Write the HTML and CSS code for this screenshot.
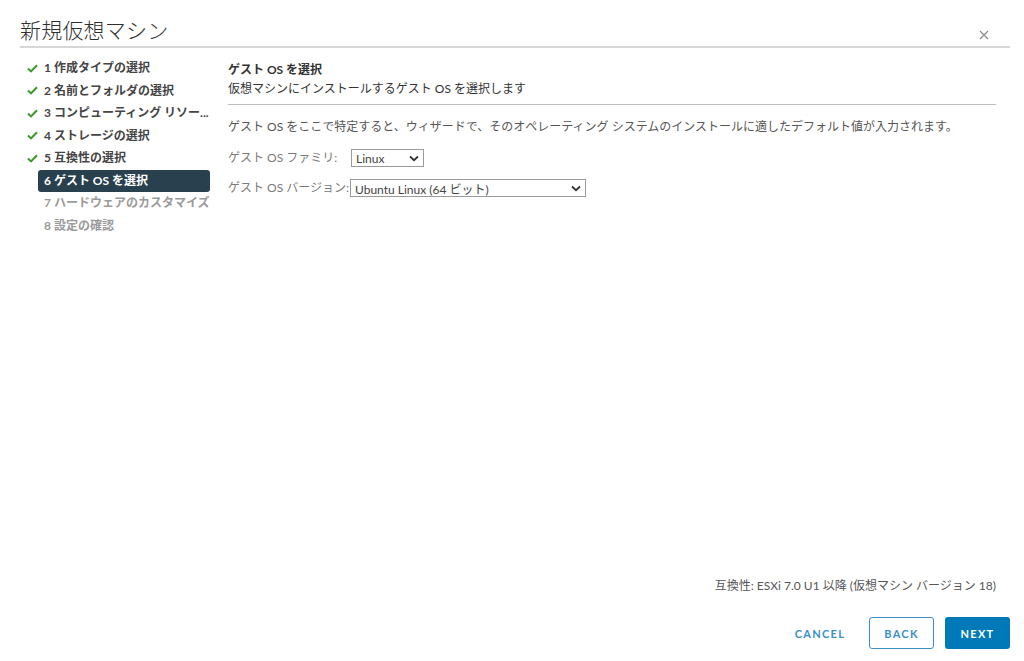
FILE: index.html
```html
<!DOCTYPE html>
<html lang="ja">
<head>
<meta charset="utf-8">
<title>新規仮想マシン</title>
<link rel="stylesheet" href="styles.css">
</head>
<body>
<div class="modal">
  <header class="header">
    <h1 class="title">新規仮想マシン</h1>
    <button class="close" aria-label="閉じる">
      <svg width="10" height="10" viewBox="0 0 10 10"><path d="M1 1 L9 9 M9 1 L1 9" stroke="#8a8a8a" stroke-width="1.2" fill="none"/></svg>
    </button>
  </header>
  <div class="body">
    <nav class="steps">
      <div class="step done"><span class="ico"><svg width="11" height="9" viewBox="0 0 11 9"><path d="M1 4.6 L4 7.4 L10 1.2" stroke="#3a9a2a" stroke-width="2.1" fill="none"/></svg></span><span class="lbl">1 作成タイプの選択</span></div>
      <div class="step done"><span class="ico"><svg width="11" height="9" viewBox="0 0 11 9"><path d="M1 4.6 L4 7.4 L10 1.2" stroke="#3a9a2a" stroke-width="2.1" fill="none"/></svg></span><span class="lbl">2 名前とフォルダの選択</span></div>
      <div class="step done"><span class="ico"><svg width="11" height="9" viewBox="0 0 11 9"><path d="M1 4.6 L4 7.4 L10 1.2" stroke="#3a9a2a" stroke-width="2.1" fill="none"/></svg></span><span class="lbl">3 コンピューティング リソー...</span></div>
      <div class="step done"><span class="ico"><svg width="11" height="9" viewBox="0 0 11 9"><path d="M1 4.6 L4 7.4 L10 1.2" stroke="#3a9a2a" stroke-width="2.1" fill="none"/></svg></span><span class="lbl">4 ストレージの選択</span></div>
      <div class="step done"><span class="ico"><svg width="11" height="9" viewBox="0 0 11 9"><path d="M1 4.6 L4 7.4 L10 1.2" stroke="#3a9a2a" stroke-width="2.1" fill="none"/></svg></span><span class="lbl">5 互換性の選択</span></div>
      <div class="step active"><span class="ico"></span><span class="lbl">6 ゲスト OS を選択</span></div>
      <div class="step todo"><span class="ico"></span><span class="lbl">7 ハードウェアのカスタマイズ</span></div>
      <div class="step todo"><span class="ico"></span><span class="lbl">8 設定の確認</span></div>
    </nav>
    <main class="content">
      <h2 class="heading">ゲスト OS を選択</h2>
      <p class="sub">仮想マシンにインストールするゲスト OS を選択します</p>
      <p class="desc">ゲスト OS をここで特定すると、ウィザードで、そのオペレーティング システムのインストールに適したデフォルト値が入力されます。</p>
      <div class="form">
        <label class="flabel">ゲスト OS ファミリ:</label>
        <div class="select small"><span>Linux</span><svg class="chev" width="10" height="7" viewBox="0 0 10 7"><path d="M1 1.5 L5 5.2 L9 1.5" stroke="#333" stroke-width="1.8" fill="none"/></svg></div>
        <label class="flabel">ゲスト OS バージョン:</label>
        <div class="select wide"><span>Ubuntu Linux (64 ビット)</span><svg class="chev" width="10" height="7" viewBox="0 0 10 7"><path d="M1 1.5 L5 5.2 L9 1.5" stroke="#333" stroke-width="1.8" fill="none"/></svg></div>
      </div>
    </main>
  </div>
  <footer class="footer">
    <p class="compat">互換性: ESXi 7.0 U1 以降 (仮想マシン バージョン 18)</p>
    <div class="buttons">
      <button class="btn link">CANCEL</button>
      <button class="btn outline">BACK</button>
      <button class="btn primary">NEXT</button>
    </div>
  </footer>
</div>
</body>
</html>
```

FILE: styles.css
```css
* { box-sizing: border-box; }
html, body { margin: 0; padding: 0; background: #fff; }
body {
  font-family: Lato, "Noto Sans CJK JP", sans-serif;
  color: #333;
  font-size: 12px;
}
.modal {
  height: 661px;
  display: flex;
  flex-direction: column;
  padding: 0 14px 12px 20px;
}
.header {
  display: flex;
  justify-content: space-between;
  align-items: flex-end;
  border-bottom: 2px solid #d7d7d7;
  height: 48px;
  padding-bottom: 2px;
}
.title {
  margin: 0;
  font-size: 21px;
  font-weight: 300;
  color: #2f2f2f;
  line-height: 28px;
  letter-spacing: 0.2px;
}
.close {
  border: 0;
  background: none;
  padding: 0;
  margin: 0 20px 3px 0;
  width: 12px;
  height: 12px;
  display: flex;
  align-items: center;
  justify-content: center;
}
.body {
  flex: 1;
  display: flex;
}
.steps {
  width: 190px;
  padding-top: 9px;
  display: flex;
  flex-direction: column;
}
.step {
  display: flex;
  align-items: center;
  height: 22.5px;
}
.ico {
  width: 18px;
  flex: none;
  display: flex;
  align-items: center;
  padding-left: 7px;
}
.lbl {
  flex: 1;
  font-weight: 700;
  font-size: 12px;
  line-height: 22px;
  height: 22px;
  padding-left: 6px;
  border-radius: 3px;
  white-space: nowrap;
  color: #454545;
}
.step.active .lbl {
  background: #29414e;
  color: #fff;
}
.step.todo .lbl { color: #9a9a9a; }
.content {
  flex: 1;
  padding: 13px 14px 0 18px;
}
.heading {
  margin: 0;
  font-size: 12px;
  font-weight: 700;
  line-height: 18px;
  color: #333;
}
.sub {
  margin: 1px 0 0;
  line-height: 18px;
  padding-bottom: 6px;
  border-bottom: 1px solid #bdbdbd;
  color: #333;
}
.desc {
  margin: 13px 0 0;
  line-height: 18px;
  color: #565656;
}
.form {
  display: grid;
  grid-template-columns: 122px auto;
  row-gap: 12px;
  align-items: center;
  margin-top: 13px;
  justify-items: start;
}
.flabel { color: #7a7a7a; line-height: 18px; }
.select {
  height: 18px;
  border: 1px solid #9a9a9a;
  display: flex;
  align-items: center;
  justify-content: space-between;
  padding: 0 4px 0 4px;
  color: #444;
  font-size: 12px;
}
.select.small { width: 73px; margin-left: 1px; }
.select.wide { width: 236px; }
.footer {
  display: flex;
  flex-direction: column;
  align-items: flex-end;
}
.compat {
  margin: 0 14px 22px 0;
  line-height: 18px;
  color: #565656;
}
.buttons {
  display: flex;
  gap: 11px;
}
.btn {
  font-family: Lato, "Noto Sans CJK JP", sans-serif;
  font-size: 11px;
  font-weight: 700;
  letter-spacing: 1.3px;
  height: 32px;
  border-radius: 3px;
  padding: 0;
  background: none;
  border: 1px solid transparent;
}
.btn.link { color: #3a8fc6; width: 76px; }
.btn.outline { color: #3a8fc6; border-color: #3a8fc6; width: 65px; }
.btn.primary { background: #0079b8; color: #fff; width: 65px; }
```
